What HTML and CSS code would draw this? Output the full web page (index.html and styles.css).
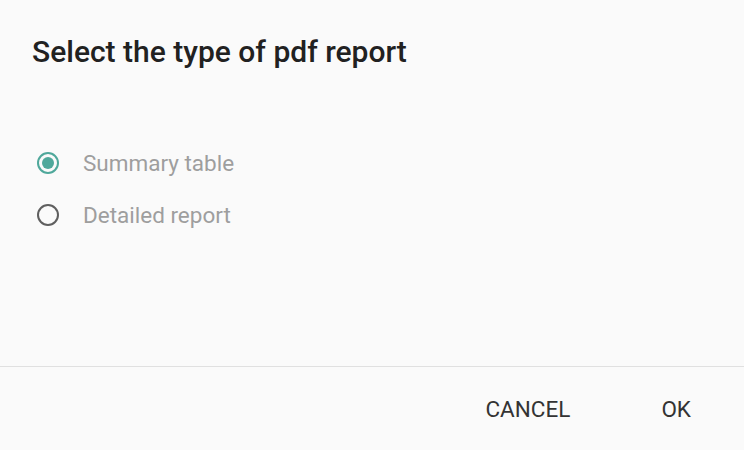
FILE: index.html
```html
<!DOCTYPE html>
<html lang="en">
<head>
    <meta charset="UTF-8">
    <meta name="viewport" content="width=device-width, initial-scale=1.0">
    <title>PDF Report</title>
    <link rel="stylesheet" href="styles.css">
</head>
<body>
    <div class="dialog">
        <h1 class="dialog-title">Select the type of pdf report</h1>
        <div class="options">
            <label class="option">
                <input type="radio" name="reportType" value="summary" checked>
                <span class="radio"></span>
                <span class="option-label">Summary table</span>
            </label>
            <label class="option">
                <input type="radio" name="reportType" value="detailed">
                <span class="radio"></span>
                <span class="option-label">Detailed report</span>
            </label>
        </div>
        <div class="actions">
            <button class="action-btn">CANCEL</button>
            <button class="action-btn">OK</button>
        </div>
    </div>
</body>
</html>
```

FILE: styles.css
```css
body {
    font-family: Roboto, "Noto Sans", Arial, sans-serif;
    background-color: #fafafa;
    margin: 0;
}
.dialog {
    height: 450px;
    display: flex;
    flex-direction: column;
}
.dialog-title {
    font-size: 30px;
    font-weight: 500;
    color: #212121;
    margin: 0;
    padding: 34px 32px 0;
    line-height: 36px;
}
.options {
    flex: 1;
    padding: 77px 37px 0;
    display: flex;
    flex-direction: column;
    gap: 20px;
}
.option {
    display: flex;
    align-items: center;
    height: 32px;
    cursor: pointer;
}
.option input {
    display: none;
}
.radio {
    width: 18px;
    height: 18px;
    border: 2.5px solid #5f5f5f;
    border-radius: 50%;
    display: flex;
    align-items: center;
    justify-content: center;
    margin-right: 24px;
}
.option input:checked + .radio {
    border-color: #4fa89b;
}
.option input:checked + .radio::after {
    content: '';
    width: 12px;
    height: 12px;
    border-radius: 50%;
    background-color: #4fa89b;
}
.option-label {
    font-size: 22.5px;
    color: #9e9e9e;
}
.actions {
    border-top: 1px solid #e0e0e0;
    height: 84px;
    box-sizing: border-box;
    display: flex;
    justify-content: flex-end;
    align-items: center;
    padding: 1px 53px 0 0;
    gap: 91px;
}
.action-btn {
    font-family: Roboto, Arial, sans-serif;
    font-size: 22.5px;
    color: #333;
    background: none;
    border: none;
    padding: 0;
    cursor: pointer;
}
```
